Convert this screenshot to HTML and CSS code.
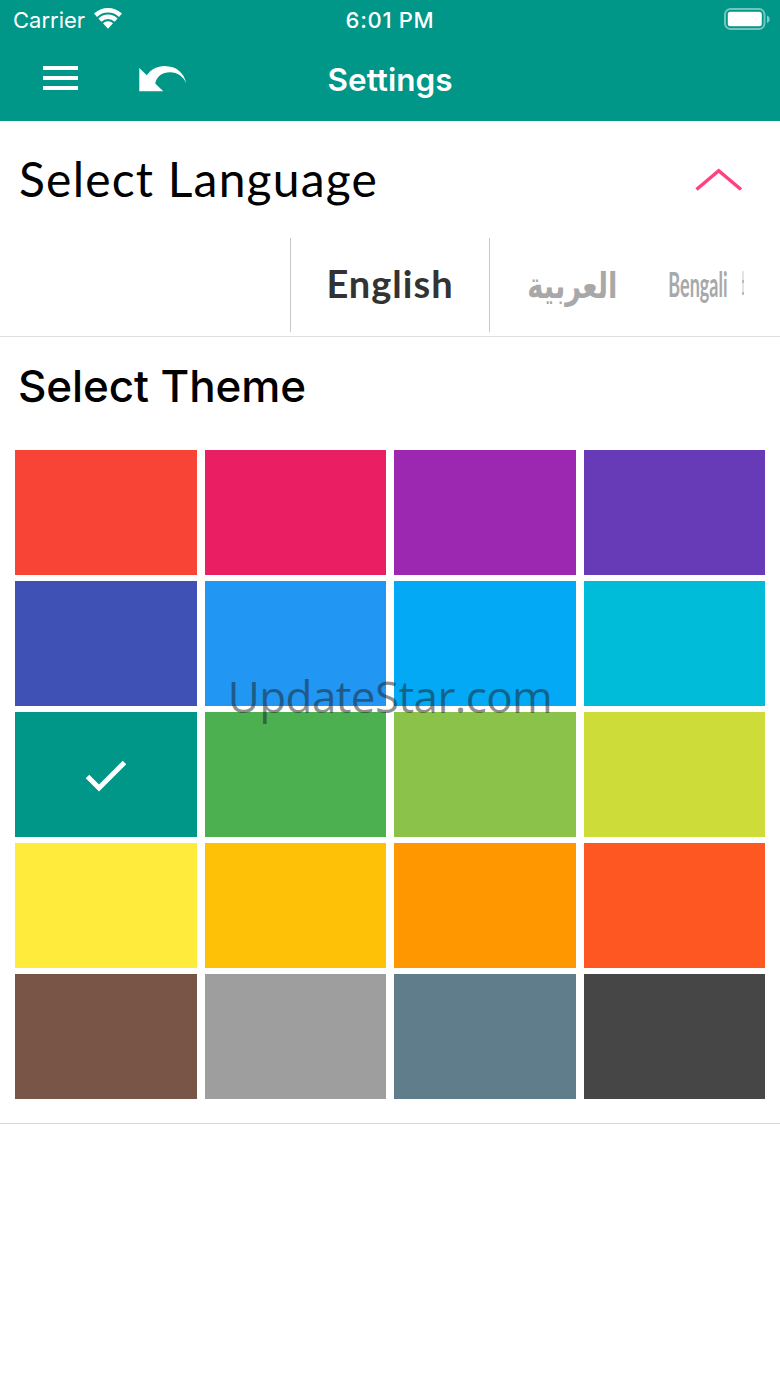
FILE: index.html
```html
<!DOCTYPE html>
<html lang="en">
<head>
    <meta charset="UTF-8">
    <meta name="viewport" content="width=device-width, initial-scale=1.0">
    <title>Settings</title>
    <link rel="stylesheet" href="styles.css">
</head>
<body>
    <header class="header">
        <div class="status-bar">
            <div class="carrier">
                <span class="carrier-name">Carrier</span>
                <svg class="wifi" width="28" height="21" viewBox="0 0 28 21" aria-hidden="true">
                    <path d="M0 5.6 A20.5 20.5 0 0 1 28 5.6 L25 8.9 A16 16 0 0 0 3 8.9 Z"/>
                    <path d="M4.4 10.4 A13.8 13.8 0 0 1 23.6 10.4 L20.6 13.7 A9.6 9.6 0 0 0 7.4 13.7 Z"/>
                    <path d="M9 15.3 A7.2 7.2 0 0 1 19 15.3 L14 20.8 Z"/>
                </svg>
            </div>
            <span class="time">6:01 PM</span>
            <svg class="battery" width="48" height="22" viewBox="0 0 48 22" aria-hidden="true">
                <rect class="battery-shell" x="1" y="1" width="39.5" height="20" rx="5.5"/>
                <rect x="3.8" y="3.8" width="34" height="14.4" rx="2.5"/>
                <path class="battery-tip" d="M43 7.5 C46.6 9 46.6 13.5 43 15 Z"/>
            </svg>
        </div>
        <nav class="nav-bar">
            <div class="nav-buttons">
                <svg class="menu-icon" width="36" height="26" viewBox="0 0 36 26" aria-label="Menu">
                    <path d="M0 0h35v4H0z M0 10h35v4H0z M0 20h35v4H0z"/>
                </svg>
                <svg class="back-icon" width="48" height="28" viewBox="0 0 48 28" aria-label="Back">
                    <path d="M0.3 3 L7.8 10.2 C12 4.5 18 1 25.5 1 C38 1.2 45 8 47.3 18.5 C44.5 11.5 38.5 7.3 31 7.2 C23 7.4 17.5 11.5 16.2 18.6 L24.3 26.3 L0.3 26.3 Z"/>
                </svg>
            </div>
            <h1 class="title">Settings</h1>
        </nav>
    </header>

    <main>
        <section class="language">
            <div class="language-head">
                <h2 class="language-title">Select Language</h2>
                <svg class="chevron" width="48" height="24" viewBox="0 0 48 24" aria-hidden="true">
                    <path d="M1.5 21.5 L23.7 2.7 L46 21.5"/>
                </svg>
            </div>
            <div class="picker">
                <div class="picker-item selected"><span class="english">English</span></div>
                <div class="picker-item"><span class="arabic" lang="ar">العربية</span></div>
                <div class="picker-item bengali-item"><span class="bengali">Bengali</span></div>
                <div class="picker-edge"></div>
            </div>
        </section>

        <section class="theme">
            <h2 class="theme-title">Select Theme</h2>
            <div class="swatches">
                <div class="swatch red"></div>
                <div class="swatch pink"></div>
                <div class="swatch purple"></div>
                <div class="swatch deep-purple"></div>
                <div class="swatch indigo"></div>
                <div class="swatch blue"></div>
                <div class="swatch light-blue"></div>
                <div class="swatch cyan"></div>
                <div class="swatch teal">
                    <svg class="check" width="42" height="34" viewBox="0 0 42 34" aria-label="Selected">
                        <path d="M2.5 18.5 L14 30 L39.5 4.5"/>
                    </svg>
                </div>
                <div class="swatch green"></div>
                <div class="swatch light-green"></div>
                <div class="swatch lime"></div>
                <div class="swatch yellow"></div>
                <div class="swatch amber"></div>
                <div class="swatch orange"></div>
                <div class="swatch deep-orange"></div>
                <div class="swatch brown"></div>
                <div class="swatch grey"></div>
                <div class="swatch blue-grey"></div>
                <div class="swatch dark"></div>
            </div>
            <div class="watermark">UpdateStar.com</div>
        </section>
    </main>
</body>
</html>
```
FILE: styles.css
```css
/* Global Styles */
* {
    box-sizing: border-box;
}

body {
    font-family: Inter, "Liberation Sans", sans-serif;
    background-color: #fff;
    color: #000;
    margin: 0;
    min-height: 1387px;
}

h1,
h2 {
    margin: 0;
}

svg {
    display: block;
}

/* Header */
.header {
    height: 121px;
    background-color: #009688;
    color: #fff;
    fill: #fff;
}

.status-bar {
    display: grid;
    grid-template-columns: 1fr auto 1fr;
    align-items: center;
    height: 40px;
    padding: 0 10px 0 13px;
    font-size: 22px;
}

.carrier {
    display: flex;
    align-items: center;
    gap: 9px;
}

.wifi {
    margin-bottom: 3px;
}

.time {
    font-weight: 500;
    letter-spacing: 0.7px;
    margin-left: -3px;
}

.battery {
    justify-self: end;
    margin-right: -2px;
    margin-bottom: 2px;
}

.battery-shell {
    fill: none;
    stroke: rgba(255, 255, 255, 0.45);
    stroke-width: 2;
}

.battery-tip {
    fill: rgba(255, 255, 255, 0.5);
}

.nav-bar {
    display: grid;
    grid-template-columns: 1fr auto 1fr;
    align-items: center;
    height: 78px;
}

.nav-buttons {
    display: flex;
    align-items: center;
    gap: 60px;
    padding-left: 43px;
}

.title {
    font-size: 31.5px;
    font-weight: 600;
}

/* Language */
.language {
    height: 216px;
    border-bottom: 1px solid #dedede;
}

.language-head {
    display: flex;
    justify-content: space-between;
    align-items: center;
    height: 117px;
    padding: 0 37px 0 19px;
}

.language-title {
    font-family: Lato, sans-serif;
    font-size: 48px;
    font-weight: 400;
    letter-spacing: 1.2px;
    margin-bottom: 3px;
}

.chevron {
    fill: none;
    stroke: #ff4081;
    stroke-width: 3.5;
}

.picker {
    display: flex;
    height: 94px;
    padding-left: 290px;
    color: #a8a8a8;
}

.picker-item {
    display: flex;
    justify-content: center;
    align-items: center;
    width: 164px;
}

.picker-item.selected {
    width: 200px;
    border-left: 1px solid #c8c8c8;
    border-right: 1px solid #c8c8c8;
    color: #333;
}

.bengali-item {
    width: 88px;
}

.english {
    font-family: Lato, sans-serif;
    font-size: 38px;
    font-weight: 700;
    letter-spacing: 1px;
    margin-bottom: 5px;
}

.arabic {
    font-family: "DejaVu Sans", sans-serif;
    font-size: 36px;
    font-weight: 700;
    transform: scaleX(0.76);
}

.bengali {
    font-family: Lato, sans-serif;
    font-size: 34px;
    font-weight: 700;
    margin-bottom: 4px;
    transform: scaleX(0.53);
}

/* Sliver of the next language rotating into view */
.picker-edge {
    align-self: center;
    width: 2px;
    height: 24px;
    margin-bottom: 4px;
    background: repeating-linear-gradient(#e4e4e4 0 9px, #bbb 9px 12px);
}

/* Theme */
.theme {
    position: relative;
    height: 787px;
    border-bottom: 1px solid #d8d8d8;
}

.theme-title {
    height: 113px;
    padding: 22px 18px 0;
    font-size: 44px;
    font-weight: 500;
    letter-spacing: -0.1px;
    line-height: 54px;
}

.swatches {
    display: grid;
    grid-template-columns: repeat(4, 1fr);
    grid-auto-rows: 125px;
    gap: 6px 8px;
    padding: 0 15px;
}

.swatch {
    display: flex;
    justify-content: center;
    align-items: center;
}

.check {
    fill: none;
    stroke: #fff;
    stroke-width: 5;
}

.red { background-color: #f84436; }
.pink { background-color: #e91e63; }
.purple { background-color: #9c27b0; }
.deep-purple { background-color: #673ab7; }
.indigo { background-color: #3f51b5; }
.blue { background-color: #2196f3; }
.light-blue { background-color: #03a9f4; }
.cyan { background-color: #00bcd9; }
.teal { background-color: #009688; }
.green { background-color: #4caf50; }
.light-green { background-color: #8bc34a; }
.lime { background-color: #cddc39; }
.yellow { background-color: #ffeb3b; }
.amber { background-color: #ffc107; }
.orange { background-color: #ff9800; }
.deep-orange { background-color: #ff5722; }
.brown { background-color: #795548; }
.grey { background-color: #9e9e9e; }
.blue-grey { background-color: #607d8b; }
.dark { background-color: #464646; }

.watermark {
    position: absolute;
    top: 329px;
    left: 0;
    width: 100%;
    text-align: center;
    font-family: "Open Sans", sans-serif;
    font-size: 44px;
    letter-spacing: -0.6px;
    line-height: 60px;
    color: rgba(30, 30, 30, 0.5);
}
```
